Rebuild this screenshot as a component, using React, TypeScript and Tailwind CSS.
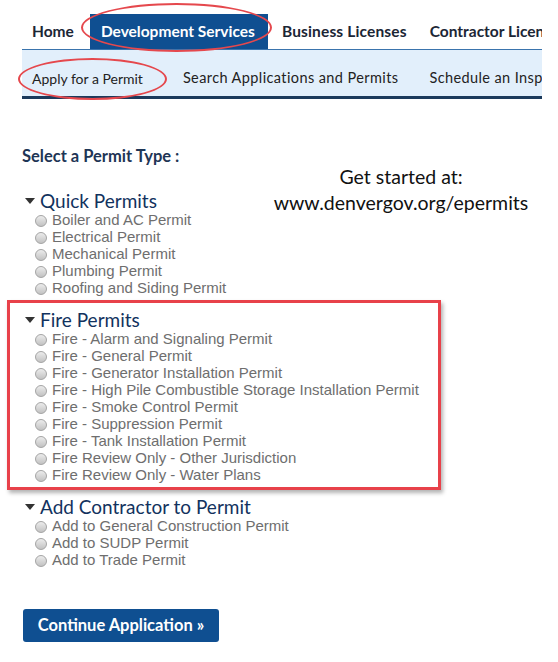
import React from 'react';

const quick = [
  'Boiler and AC Permit',
  'Electrical Permit',
  'Mechanical Permit',
  'Plumbing Permit',
  'Roofing and Siding Permit',
];

const fire = [
  'Fire - Alarm and Signaling Permit',
  'Fire - General Permit',
  'Fire - Generator Installation Permit',
  'Fire - High Pile Combustible Storage Installation Permit',
  'Fire - Smoke Control Permit',
  'Fire - Suppression Permit',
  'Fire - Tank Installation Permit',
  'Fire Review Only - Other Jurisdiction',
  'Fire Review Only - Water Plans',
];

const contractor = [
  'Add to General Construction Permit',
  'Add to SUDP Permit',
  'Add to Trade Permit',
];

const Radio: React.FC = () => (
  <span className="inline-block w-[12px] h-[12px] rounded-full border border-[#a4a4a4] bg-gradient-to-b from-[#ececec] to-[#c2c2c2] shrink-0" />
);

const Group: React.FC<{ title: string; items: string[] }> = ({ title, items }) => (
  <div>
    <div className="flex items-center h-[22px]">
      <span className="w-0 h-0 border-l-[5px] border-r-[5px] border-t-[6px] border-l-transparent border-r-transparent border-t-[#333] ml-[3px] mr-[5px]" />
      <span className="text-[19px] leading-[22px] text-[#12325e] font-['Lato',sans-serif]">{title}</span>
    </div>
    <ul>
      {items.map((it) => (
        <li key={it} className="flex items-center gap-[5px] pl-[13px] h-[17px] text-[15px] text-[#6e6e6e] font-['Liberation_Sans',Arial,sans-serif]">
          <Radio />
          <span>{it}</span>
        </li>
      ))}
    </ul>
  </div>
);

export default function App() {
  return (
    <div className="w-[558px] h-[662px] bg-white overflow-hidden font-['Lato',sans-serif]">
      <div className="pl-[22px] w-[542px]">
        {/* top nav */}
        <div className="relative mt-[14px]">
          <nav className="flex h-[35px] items-center text-[15.5px] font-bold text-[#1b2635] whitespace-nowrap overflow-hidden">
            <span className="pl-[10px] pr-[16px]">Home</span>
            <span className="relative h-full flex items-center pl-[11px] pr-[13px] bg-[#0f4f91] text-white">
              Development Services
              <span className="absolute left-[69px] top-full w-0 h-0 border-l-[5px] border-r-[5px] border-t-[4px] border-l-transparent border-r-transparent border-t-[#0f4f91] z-10" />
            </span>
            <span className="pl-[14px] pr-[23px] tracking-[0.15px]">Business Licenses</span>
            <span>Contractor Licenses</span>
          </nav>
          <div className="flex h-[50px] items-center pt-[10px] bg-[#e2effb] border-t border-[#3a74ad] border-b-[3px] border-b-[#1b3a5c] text-[14px] text-[#222] whitespace-nowrap overflow-hidden">
            <span className="pl-[10px] pr-[40px]">Apply for a Permit</span>
            <span className="pr-[31px] text-[14.5px] tracking-[0.4px]">Search Applications and Permits</span>
            <span className="text-[14.5px] tracking-[0.4px]">Schedule an Inspection</span>
          </div>
          {/* annotation ellipses */}
          <span className="absolute left-[59px] top-[-11px] w-[191px] h-[49px] rounded-[50%] border-[2px] border-[#e5484d]" />
          <span className="absolute left-[-4px] top-[44px] w-[149px] h-[42px] rounded-[50%] border-[2px] border-[#e5484d]" />
        </div>

        {/* intro + quick permits */}
        <div className="flex mt-[47px]">
          <div className="flex-1">
            <div className="h-[20px] leading-[20px] text-[16.5px] font-bold text-[#1e3555]">Select a Permit Type :</div>
            <div className="mt-[24px]">
              <Group title="Quick Permits" items={quick} />
            </div>
          </div>
          <div className="w-[262px] mr-[10px] pt-[18px] text-center text-[19.5px] leading-[26px] text-[#111] font-['Lato',sans-serif]">
            <div>Get started at:</div>
            <div>www.denvergov.org/epermits</div>
          </div>
        </div>

        {/* fire permits annotated box */}
        <div className="ml-[-15px] w-[434px] mt-[3px] border-[3px] border-[#e8414a] shadow-[2px_3px_4px_rgba(0,0,0,0.3)] pl-[12px] pt-[6px] pb-[3px]">
          <Group title="Fire Permits" items={fire} />
        </div>

        <div className="mt-[6px]">
          <Group title="Add Contractor to Permit" items={contractor} />
        </div>

        <button className="mt-[40px] ml-[1px] w-[196px] h-[33px] rounded-[3px] bg-[#0f4f91] text-white font-bold text-[16.5px]">
          Continue Application »
        </button>
      </div>
    </div>
  );
}
